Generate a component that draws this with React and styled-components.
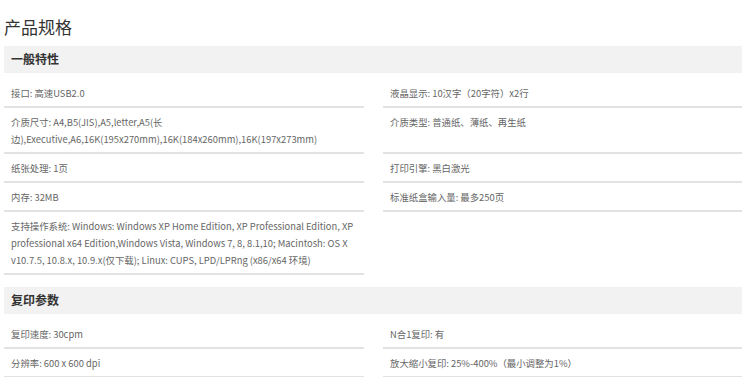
import React from 'react';
import styled, { createGlobalStyle } from 'styled-components';

const sections = [
  {
    title: '一般特性',
    items: [
      '接口: 高速USB2.0',
      '液晶显示: 10汉字（20字符）x2行',
      '介质尺寸: A4,B5(JIS),A5,letter,A5(长边),Executive,A6,16K(195x270mm),16K(184x260mm),16K(197x273mm)',
      '介质类型: 普通纸、薄纸、再生纸',
      '纸张处理: 1页',
      '打印引擎: 黑白激光',
      '内存: 32MB',
      '标准纸盒输入量: 最多250页',
      '支持操作系统: Windows: Windows XP Home Edition, XP Professional Edition, XP professional x64 Edition,Windows Vista, Windows 7, 8, 8.1,10; Macintosh: OS X v10.7.5, 10.8.x, 10.9.x(仅下载); Linux: CUPS, LPD/LPRng (x86/x64 环境)',
    ],
  },
  {
    title: '复印参数',
    items: [
      '复印速度: 30cpm',
      'N合1复印: 有',
      '分辨率: 600 x 600 dpi',
      '放大缩小复印: 25%-400%（最小调整为1%）',
    ],
  },
];

const GlobalStyle = createGlobalStyle`
  body {
    margin: 0;
    background: #fff;
    font-family: "Noto Sans CJK SC", sans-serif;
  }
`;

const StyledPage = styled.div`
  padding: 0 8px 0 4px;
`;

const StyledTitle = styled.h2`
  margin: 0;
  padding-top: 14px;
  height: 32px;
  font-size: 17px;
  font-weight: 400;
  line-height: 26px;
  color: #333;
`;

const StyledSection = styled.div`
  margin-bottom: 12px;
`;

const StyledSectionName = styled.div`
  height: 26.5px;
  line-height: 26.5px;
  padding-left: 7px;
  background: #f2f2f2;
  font-size: 12px;
  font-weight: 700;
  color: #333;
`;

const StyledList = styled.ul`
  list-style: none;
  margin: 6.5px 0 0;
  padding: 0;
  display: grid;
  grid-template-columns: 360px 359px;
  column-gap: 19px;
`;

const StyledItem = styled.li`
  padding: 5.5px 7px 4.5px;
  border-bottom: 2px solid #e2e2e2;
  font-size: 9.4px;
  line-height: 17px;
  color: #666;
`;

const App = () => {
  return (
    <StyledPage>
      <GlobalStyle />
      <StyledTitle>产品规格</StyledTitle>
      {sections.map(section => (
        <StyledSection key={section.title}>
          <StyledSectionName>{section.title}</StyledSectionName>
          <StyledList>
            {section.items.map(item => (
              <StyledItem key={item}>{item}</StyledItem>
            ))}
          </StyledList>
        </StyledSection>
      ))}
    </StyledPage>
  );
};

export default App;
